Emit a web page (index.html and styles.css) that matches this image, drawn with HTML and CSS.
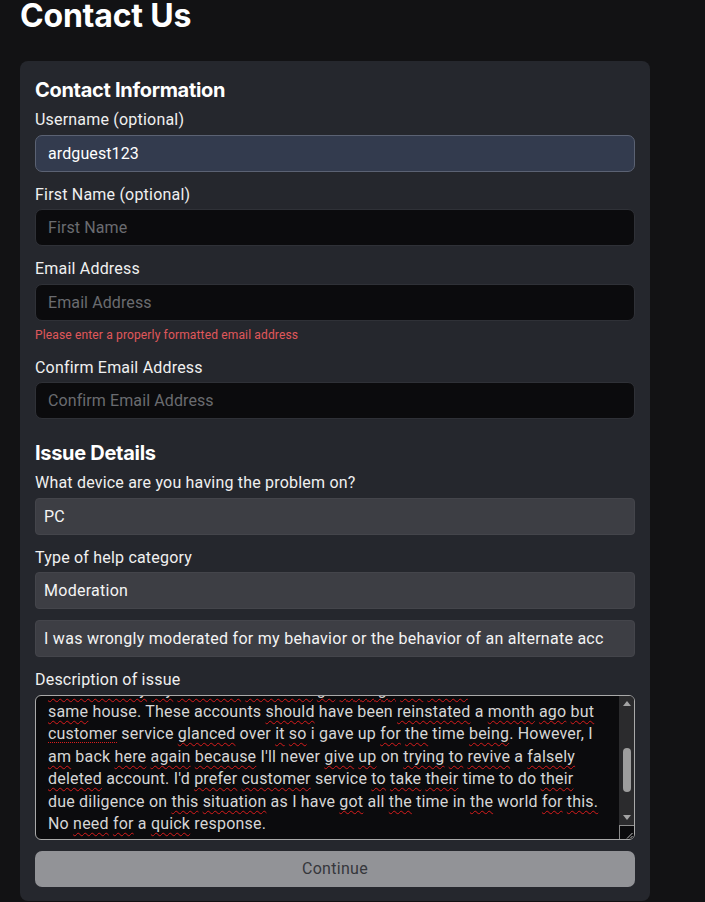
FILE: index.html
```html
<!DOCTYPE html>
<html lang="en">
<head>
<meta charset="utf-8">
<title>Contact Us</title>
<link rel="stylesheet" href="styles.css">
</head>
<body>
<h1 class="page-title">Contact Us</h1>
<form class="card">
  <h2 class="section-title">Contact Information</h2>
  <div class="field">
    <label class="label">Username (optional)</label>
    <div class="input input-filled">ardguest123</div>
  </div>
  <div class="field">
    <label class="label">First Name (optional)</label>
    <div class="input input-empty">First Name</div>
  </div>
  <div class="field">
    <label class="label">Email Address</label>
    <div class="input input-empty">Email Address</div>
    <div class="error">Please enter a properly formatted email address</div>
  </div>
  <div class="field">
    <label class="label">Confirm Email Address</label>
    <div class="input input-empty">Confirm Email Address</div>
  </div>

  <h2 class="section-title section-gap">Issue Details</h2>
  <div class="field">
    <label class="label">What device are you having the problem on?</label>
    <div class="select"><span class="select-text">PC</span></div>
  </div>
  <div class="field">
    <label class="label">Type of help category</label>
    <div class="select"><span class="select-text">Moderation</span></div>
  </div>
  <div class="field">
    <div class="select"><span class="select-text">I was wrongly moderated for my behavior or the behavior of an alternate account</span></div>
  </div>
  <div class="field">
    <label class="label">Description of issue</label>
    <div class="textarea">
      <div class="ta-text">
        <div class="ta-lines">
          <div class="ta-line"><span class="sp">Unfortunately</span> <span class="sp">my</span> <span class="sp">brother's</span> <span class="sp">accounts</span> <span class="sp">go</span> <span class="sp">through</span> <span class="sp">the</span> <span class="sp">same</span> network because we live in the</div>
          <div class="ta-line"><span class="sp">same</span> house. These accounts <span class="sp">should</span> have been <span class="sp">reinstated</span> a <span class="sp">month</span> <span class="sp">ago</span> <span class="sp">but</span></div>
          <div class="ta-line"><span class="sp dotted">customer</span> service <span class="sp">glanced</span> over <span class="sp">it</span> <span class="sp">so</span> i gave up <span class="sp">for</span> <span class="sp">the</span> time <span class="sp">being</span>. However, I</div>
          <div class="ta-line"><span class="sp">am</span> back <span class="sp">here</span> <span class="sp">again</span> <span class="sp">because</span> I'll never <span class="sp">give</span> <span class="sp">up</span> on <span class="sp">trying</span> <span class="sp">to</span> <span class="sp">revive</span> a <span class="sp">falsely</span></div>
          <div class="ta-line"><span class="sp">deleted</span> account. I'd <span class="sp">prefer</span> <span class="sp">customer</span> service <span class="sp">to</span> <span class="sp">take</span> <span class="sp">their</span> time to do <span class="sp">their</span></div>
          <div class="ta-line">due diligence on <span class="sp">this</span> <span class="sp">situation</span> as I have <span class="sp">got</span> all <span class="sp">the</span> time in <span class="sp">the</span> world <span class="sp">for</span> <span class="sp">this.</span></div>
          <div class="ta-line">No <span class="sp">need</span> <span class="sp">for</span> a <span class="sp">quick</span> response.</div>
        </div>
      </div>
      <div class="ta-scroll">
        <div class="sb-btn"><svg width="8" height="5" viewBox="0 0 8 5"><path d="M4 0 L8 5 L0 5 Z" fill="#a3a3a3"/></svg></div>
        <div class="sb-track"><div class="sb-thumb"></div></div>
        <div class="sb-btn"><svg width="8" height="5" viewBox="0 0 8 5"><path d="M0 0 L8 0 L4 5 Z" fill="#a3a3a3"/></svg></div>
        <div class="sb-resizer"><svg width="14" height="14" viewBox="0 0 14 14"><path d="M12.5 7 L7 12.5 M12.5 10 L10 12.5" stroke="#bdbdbd" stroke-width="1" fill="none"/></svg></div>
      </div>
    </div>
  </div>
  <button type="button" class="btn">Continue</button>
</form>
</body>
</html>
```

FILE: styles.css
```css
html, body {
  margin: 0;
  padding: 0;
}

body {
  background: #121214;
  color: #f2f2f2;
  font-family: Roboto, "Liberation Sans", sans-serif;
  padding-left: 20px;
}

.page-title {
  margin: 0 0 29px;
  font-family: Inter, "Liberation Sans", sans-serif;
  font-weight: 700;
  font-size: 32px;
  line-height: 32px;
  color: #ffffff;
  letter-spacing: -0.2px;
}

.card {
  display: flex;
  flex-direction: column;
  width: 630px;
  box-sizing: border-box;
  background: #25272d;
  border-radius: 8px;
  padding: 15px 15px 14px;
}

.section-title {
  margin: 0 0 4px;
  font-family: Inter, "Liberation Sans", sans-serif;
  font-weight: 700;
  font-size: 20px;
  line-height: 28px;
  letter-spacing: -0.3px;
  color: #ffffff;
}

.section-gap {
  margin-top: 9px;
}

.field {
  margin-bottom: 11px;
}

.label {
  display: block;
  font-size: 16px;
  line-height: 23.5px;
  letter-spacing: 0.2px;
  margin-bottom: 3px;
  color: #f0f0f0;
}

.input {
  box-sizing: border-box;
  height: 37px;
  border-radius: 7px;
  padding: 0 12px;
  display: flex;
  align-items: center;
  font-size: 16px;
  letter-spacing: 0.1px;
}

.input-filled {
  background: #333b4e;
  border: 1px solid #5b6273;
  color: #ffffff;
}

.input-empty {
  background: #0b0b0d;
  border: 1px solid #2f3137;
  color: #6a6b70;
}

.error {
  font-size: 12px;
  line-height: 18px;
  letter-spacing: 0.15px;
  margin: 5px 0 1px;
  color: #e0585b;
}

.select {
  box-sizing: border-box;
  height: 37px;
  background: #3d3e44;
  border: 1px solid #44454b;
  border-radius: 4px;
  padding: 0 30px 0 8px;
  line-height: 35px;
  font-size: 16px;
  letter-spacing: 0.27px;
  color: #f4f4f4;
}

.select-text {
  display: block;
  white-space: nowrap;
  overflow: hidden;
}

.textarea {
  box-sizing: border-box;
  height: 145px;
  border: 1px solid #a9a9a9;
  border-radius: 6px;
  background: #0b0b0d;
  display: flex;
  overflow: hidden;
}

.ta-text {
  flex: 1;
  overflow: hidden;
  padding: 0 12px;
}

.ta-lines {
  margin-top: -17px;
}

.ta-line {
  font-size: 16px;
  line-height: 22.4px;
  letter-spacing: 0.2px;
  color: #d6d6d6;
  white-space: nowrap;
}

.sp {
  text-decoration: underline wavy #d81c1c;
  text-decoration-thickness: 1px;
  text-underline-offset: 3px;
  text-decoration-skip-ink: none;
}

.dotted {
  text-decoration-style: dotted;
}

.ta-scroll {
  width: 15px;
  display: flex;
  flex-direction: column;
  background: #2b2b2d;
}

.sb-btn {
  height: 15px;
  display: flex;
  align-items: center;
  justify-content: center;
}

.sb-track {
  flex: 1;
  display: flex;
  justify-content: center;
}

.sb-thumb {
  width: 8px;
  height: 44px;
  margin-top: 37px;
  border-radius: 4px;
  background: #9d9d9d;
}

.sb-resizer {
  height: 14px;
  box-sizing: border-box;
  border-top: 1px solid #8c8c8c;
  border-left: 1px solid #8c8c8c;
  background: #0b0b0d;
  display: flex;
}

.btn {
  display: block;
  width: 100%;
  height: 36px;
  border: none;
  border-radius: 7px;
  background: #929397;
  color: #36373c;
  font-family: Roboto, "Liberation Sans", sans-serif;
  font-size: 16px;
  letter-spacing: 0.3px;
  padding: 0;
}
```
